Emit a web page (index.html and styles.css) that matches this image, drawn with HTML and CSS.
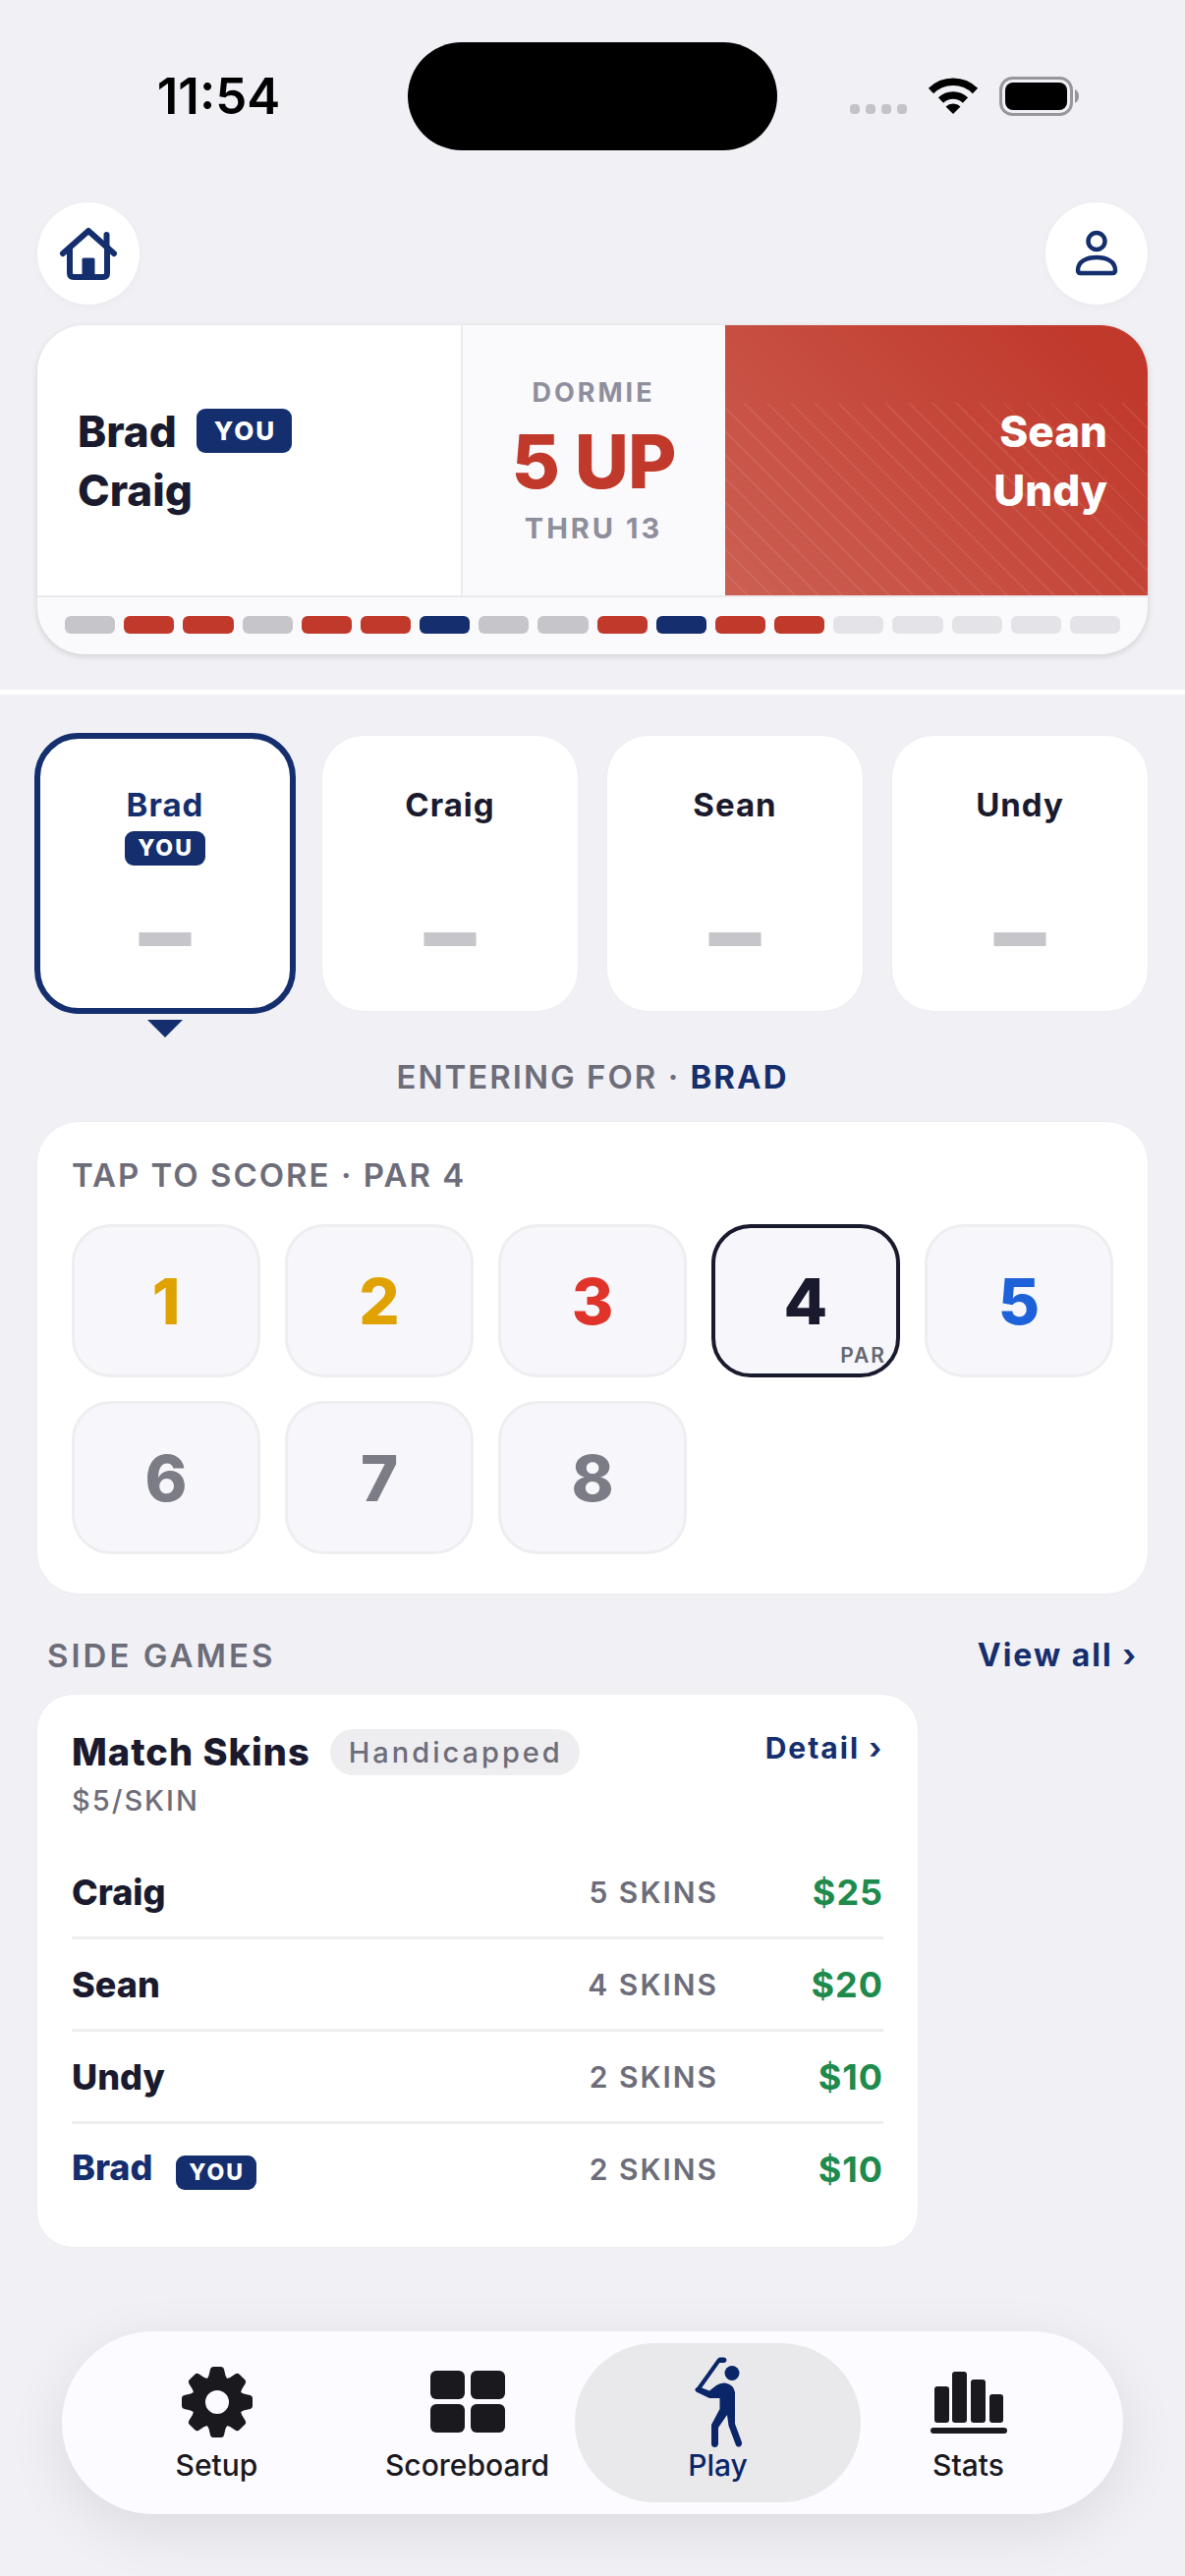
FILE: index.html
```html
<!DOCTYPE html>
<html lang="en">
<head>
    <meta charset="UTF-8">
    <meta name="viewport" content="width=device-width, initial-scale=1.0">
    <title>Match Play</title>
    <link rel="stylesheet" href="styles.css">
</head>
<body>
    <div class="status-bar">
        <div class="status-time">11:54</div>
        <div class="island"></div>
        <div class="status-icons">
            <svg class="dots" width="58" height="38" viewBox="0 0 58 38">
                <rect x="0" y="27" width="10" height="10" rx="4"/>
                <rect x="16" y="27" width="10" height="10" rx="4"/>
                <rect x="32" y="27" width="10" height="10" rx="4"/>
                <rect x="48" y="27" width="10" height="10" rx="4"/>
            </svg>
            <svg width="52" height="38" viewBox="0 0 52 38">
                <path d="M26 37 L18.500 29.500 A11 11 0 0 1 33.500 29.500 Z"/>
                <path d="M13.500 23 A18 18 0 0 1 38.500 23" fill="none" stroke="#000" stroke-width="7.500"/>
                <path d="M3.500 13.500 A32 32 0 0 1 48.500 13.500" fill="none" stroke="#000" stroke-width="7.500"/>
            </svg>
            <svg width="82" height="40" viewBox="0 0 82 40">
                <rect x="1.500" y="1.500" width="72" height="37" rx="12" fill="none" stroke="#97979b" stroke-width="3"/>
                <rect x="6" y="6" width="63" height="28" rx="8"/>
                <path d="M77 13 Q81 15 81 20 Q81 25 77 27 Z" fill="#97979b"/>
            </svg>
        </div>
    </div>

    <header class="top-nav">
        <button class="round-btn" aria-label="Home">
            <svg width="60" height="54" viewBox="0 0 60 54" fill="none" stroke="#142e6e" stroke-width="6" stroke-linecap="round" stroke-linejoin="round">
                <path d="M4 27 L30 4 L56 27"/>
                <path d="M11 23 V47 Q11 51 15 51 H45 Q49 51 49 47 V23"/>
                <path d="M48.500 8 V19"/>
                <path d="M25 33 H35 V51 H25 Z" fill="#142e6e" stroke-width="3"/>
            </svg>
        </button>
        <button class="round-btn" aria-label="Profile">
            <svg width="44" height="48" viewBox="0 0 44 48" fill="none" stroke="#142e6e" stroke-width="4.500">
                <circle cx="22" cy="11.500" r="8.500"/>
                <path d="M3 41 C3 32 12 28 22 28 C32 28 41 32 41 41 Q41 44 38 44 H6 Q3 44 3 41 Z" stroke-linejoin="round"/>
            </svg>
        </button>
    </header>

    <section class="match">
        <div class="match-top">
            <div class="team">
                <div class="team-name">Brad <span class="you you-large">YOU</span></div>
                <div class="team-name">Craig</div>
            </div>
            <div class="match-status">
                <div class="dormie">DORMIE</div>
                <div class="status-big">5 UP</div>
                <div class="thru">THRU 13</div>
            </div>
            <div class="team team-red">
                <div class="team-name">Sean</div>
                <div class="team-name">Undy</div>
            </div>
        </div>
        <div class="holes">
            <span class="hole halved"></span>
            <span class="hole red"></span>
            <span class="hole red"></span>
            <span class="hole halved"></span>
            <span class="hole red"></span>
            <span class="hole red"></span>
            <span class="hole blue"></span>
            <span class="hole halved"></span>
            <span class="hole halved"></span>
            <span class="hole red"></span>
            <span class="hole blue"></span>
            <span class="hole red"></span>
            <span class="hole red"></span>
            <span class="hole"></span>
            <span class="hole"></span>
            <span class="hole"></span>
            <span class="hole"></span>
            <span class="hole"></span>
        </div>
    </section>

    <main>
        <div class="players">
            <button class="player selected">
                <span class="player-name">Brad</span>
                <span class="you">YOU</span>
                <span class="player-score">–</span>
            </button>
            <button class="player">
                <span class="player-name">Craig</span>
                <span class="player-score">–</span>
            </button>
            <button class="player">
                <span class="player-name">Sean</span>
                <span class="player-score">–</span>
            </button>
            <button class="player">
                <span class="player-name">Undy</span>
                <span class="player-score">–</span>
            </button>
        </div>

        <p class="entering">ENTERING FOR · <strong>BRAD</strong></p>

        <section class="keypad">
            <h2 class="label">TAP TO SCORE · PAR 4</h2>
            <div class="keys">
                <button class="key eagle">1</button>
                <button class="key eagle">2</button>
                <button class="key birdie">3</button>
                <button class="key par">4<span class="par-tag">PAR</span></button>
                <button class="key bogey">5</button>
                <button class="key">6</button>
                <button class="key">7</button>
                <button class="key">8</button>
            </div>
        </section>

        <div class="section-head">
            <h2 class="label">SIDE GAMES</h2>
            <a class="view-all" href="#">View all ›</a>
        </div>

        <section class="game">
            <div class="game-head">
                <h3>Match Skins</h3>
                <span class="pill">Handicapped</span>
                <a class="detail" href="#">Detail ›</a>
            </div>
            <p class="stake">$5/SKIN</p>
            <table class="skins">
                <tr>
                    <th scope="row">Craig</th>
                    <td class="count">5 SKINS</td>
                    <td class="money">$25</td>
                </tr>
                <tr>
                    <th scope="row">Sean</th>
                    <td class="count">4 SKINS</td>
                    <td class="money">$20</td>
                </tr>
                <tr>
                    <th scope="row">Undy</th>
                    <td class="count">2 SKINS</td>
                    <td class="money">$10</td>
                </tr>
                <tr class="me">
                    <th scope="row">Brad <span class="you">YOU</span></th>
                    <td class="count">2 SKINS</td>
                    <td class="money">$10</td>
                </tr>
            </table>
        </section>
    </main>

    <nav class="tabs">
        <a class="tab" href="#">
            <svg width="72" height="72" viewBox="-36 -36 72 72">
                <defs>
                    <path id="tooth" d="M-12 -22 Q-9.500 -24 -8.500 -27 L-7 -33.500 Q-6.500 -36 -4 -36 H4 Q6.500 -36 7 -33.500 L8.500 -27 Q9.500 -24 12 -22 Z"/>
                </defs>
                <circle r="18.500" fill="none" stroke="#1a191e" stroke-width="13"/>
                <use href="#tooth"/>
                <use href="#tooth" transform="rotate(45)"/>
                <use href="#tooth" transform="rotate(90)"/>
                <use href="#tooth" transform="rotate(135)"/>
                <use href="#tooth" transform="rotate(180)"/>
                <use href="#tooth" transform="rotate(225)"/>
                <use href="#tooth" transform="rotate(270)"/>
                <use href="#tooth" transform="rotate(315)"/>
            </svg>
            <span>Setup</span>
        </a>
        <a class="tab" href="#">
            <svg width="76" height="72" viewBox="0 0 76 72">
                <rect x="0" y="4" width="35" height="29" rx="6"/>
                <rect x="41" y="4" width="35" height="29" rx="6"/>
                <rect x="0" y="38" width="35" height="29" rx="6"/>
                <rect x="41" y="38" width="35" height="29" rx="6"/>
            </svg>
            <span>Scoreboard</span>
        </a>
        <a class="tab active" href="#">
            <svg width="48" height="92" viewBox="0 0 48 92">
                <circle cx="38" cy="16.500" r="7.500"/>
                <path d="M3.500 33 L25 3 H30" fill="none" stroke="#0a2568" stroke-width="4" stroke-linecap="round" stroke-linejoin="round"/>
                <path d="M25 0.500 H30 Q32.500 1 32.500 3 Q32 6 29.500 6 H24 Z"/>
                <path d="M6 31 L15 34.500 L22 29 Q26 26 31 26.500 Q40 28 41 36 V68 L48 87 Q48.500 90 46 91.500 Q43 92 42 90 L34.500 70 L33 59 L24 72 V89 Q23 92 20.500 92 Q17.500 92 17 89 V69 L25.500 53 V42 H15 L1.500 35.500 Q-1 33 2 31 Z"/>
            </svg>
            <span>Play</span>
        </a>
        <a class="tab" href="#">
            <svg width="78" height="72" viewBox="0 0 78 72">
                <rect x="4" y="20" width="15" height="37" rx="3"/>
                <rect x="22" y="5" width="15" height="52" rx="3"/>
                <rect x="41" y="13" width="15" height="44" rx="3"/>
                <rect x="60" y="28" width="14" height="29" rx="3"/>
                <rect x="0" y="62" width="78" height="6" rx="3"/>
            </svg>
            <span>Stats</span>
        </a>
    </nav>
</body>
</html>
```
FILE: styles.css
```css
* {
    box-sizing: border-box;
}

body {
    margin: 0;
    min-height: 100vh;
    display: flex;
    flex-direction: column;
    background-color: #f1f0f5;
    color: #1a1a2e;
    font-family: Inter, "Liberation Sans", sans-serif;
}

button {
    font-family: inherit;
    border: none;
    padding: 0;
    color: inherit;
    cursor: pointer;
}

a {
    color: #142e6e;
    text-decoration: none;
}

h2, h3, p {
    margin: 0;
}

/* status bar */
.status-bar {
    display: grid;
    grid-template-columns: 1fr 376px 1fr;
    align-items: center;
    height: 195px;
    color: #000;
}

.status-time {
    padding-left: 30px;
    text-align: center;
    font-size: 51px;
    font-weight: 600;
}

.island {
    height: 110px;
    border-radius: 55px;
    background-color: #000;
}

.status-icons {
    display: flex;
    justify-content: flex-end;
    align-items: center;
    gap: 21px;
    padding-right: 107px;
}

.dots {
    fill: #c4c3c8;
}

/* header */
.top-nav {
    display: flex;
    justify-content: space-between;
    padding: 11px 38px 21px;
}

.round-btn {
    display: flex;
    align-items: center;
    justify-content: center;
    width: 104px;
    height: 104px;
    border-radius: 50%;
    background-color: #fff;
    box-shadow: 0 2px 8px rgba(0, 0, 0, 0.03);
}

/* match card */
.match {
    margin: 0 38px 36px;
    border-radius: 48px;
    overflow: hidden;
    background-color: #fafafc;
    box-shadow: 0 2px 6px rgba(0, 0, 0, 0.14);
}

.match-top {
    display: grid;
    grid-template-columns: 1fr 269px 1fr;
    height: 275px;
}

.team {
    display: flex;
    flex-direction: column;
    justify-content: center;
    padding: 0 41px;
    background-color: #fff;
}

.team-name {
    display: flex;
    align-items: center;
    gap: 20px;
    font-size: 44px;
    font-weight: 800;
    line-height: 60px;
}

.team-red {
    align-items: flex-end;
    color: #fff;
    background:
        repeating-linear-gradient(45deg, transparent 0 15px, rgba(255, 255, 255, 0.07) 15px 17px) bottom / 100% 196px no-repeat,
        linear-gradient(45deg, #cc5f53, #c0392b 90%);
}

.match-status {
    display: flex;
    flex-direction: column;
    align-items: center;
    justify-content: center;
    border-left: 2px solid #ebebee;
}

.dormie,
.thru {
    color: #8e8e9c;
    font-size: 27px;
    font-weight: 700;
    letter-spacing: 3px;
    line-height: 42px;
}

.thru {
    font-size: 29px;
}

.status-big {
    color: #c0392b;
    font-size: 76px;
    font-weight: 800;
    letter-spacing: -1px;
    line-height: 96px;
}

.holes {
    display: flex;
    gap: 9px;
    padding: 19px 28px 21px;
    border-top: 2px solid #ebebee;
}

.hole {
    flex: 1;
    height: 18px;
    border-radius: 6px;
    background-color: #e4e4e8;
}

.hole.halved {
    background-color: #c6c6ca;
}

.hole.red {
    background-color: #c0392b;
}

.hole.blue {
    background-color: #142e6e;
}

.you {
    padding: 0 12px 0 13px;
    border-radius: 9px;
    background-color: #142e6e;
    color: #fff;
    font-size: 23px;
    font-weight: 800;
    letter-spacing: 2px;
    line-height: 35px;
}

.you-large {
    padding: 0 16px 0 18px;
    font-size: 26px;
    line-height: 45px;
}

/* score entry */
main {
    padding: 42px 38px;
    border-top: 5px solid #fff;
}

.players {
    display: grid;
    grid-template-columns: repeat(4, 1fr);
    gap: 30px;
}

.player {
    position: relative;
    display: flex;
    flex-direction: column;
    align-items: center;
    gap: 7px;
    height: 280px;
    padding-top: 50px;
    border-radius: 42px;
    background-color: #fff;
    box-shadow: 0 0 3px rgba(0, 0, 0, 0.04);
}

.player.selected {
    outline: 6px solid #142e6e;
    outline-offset: -3px;
}

/* arrow under the selected player */
.player.selected::after {
    content: "";
    position: absolute;
    top: 289px;
    border: 18px solid transparent;
    border-top-color: #142e6e;
    border-bottom: none;
}

.player-name {
    font-size: 33px;
    font-weight: 700;
    letter-spacing: 1px;
    line-height: 40px;
}

.selected .player-name {
    color: #142e6e;
}

.player-score {
    margin-top: auto;
    padding-bottom: 30px;
    color: #c6c6ca;
    font-size: 106px;
    font-weight: 800;
    line-height: 100px;
}

.label,
.entering {
    color: #6d6d7a;
    font-size: 33px;
    font-weight: 600;
    letter-spacing: 2px;
    line-height: 40px;
}

.entering {
    margin: 47px 0 26px;
    text-align: center;
}

.entering strong {
    color: #142e6e;
    font-weight: 700;
}

.keypad {
    padding: 34px 35px 40px;
    border-radius: 42px;
    background-color: #fff;
    box-shadow: 0 0 3px rgba(0, 0, 0, 0.04);
}

.keys {
    display: grid;
    grid-template-columns: repeat(5, 1fr);
    gap: 24px 25px;
    margin-top: 30px;
}

.key {
    position: relative;
    height: 156px;
    border: 3px solid #eeeef1;
    border-radius: 40px;
    background-color: #f7f7fb;
    color: #7c7c86;
    font-size: 65px;
    font-weight: 800;
}

.key.eagle {
    color: #e0a200;
}

.key.birdie {
    color: #e0332a;
}

.key.par {
    border: 4px solid #1a1a2e;
    color: #1a1a2e;
}

.key.bogey {
    color: #1d62d8;
}

.par-tag {
    position: absolute;
    right: 10px;
    bottom: 5px;
    color: #66666f;
    font-size: 21px;
    font-weight: 600;
    letter-spacing: 2px;
    line-height: 26px;
}

/* side games */
.section-head {
    display: flex;
    justify-content: space-between;
    margin: 43px 10px 20px;
}

.section-head .label {
    letter-spacing: 3px;
}

.view-all,
.detail {
    font-weight: 700;
    letter-spacing: 2px;
    line-height: 40px;
}

.view-all {
    font-size: 32px;
}

.detail {
    align-self: flex-start;
    margin-left: auto;
    font-size: 30px;
    line-height: 38px;
}

.game {
    width: 79.3%;
    padding: 35px 35px 34px;
    border-radius: 36px;
    background-color: #fff;
    box-shadow: 0 0 3px rgba(0, 0, 0, 0.04);
}

.game-head {
    display: flex;
    align-items: center;
}

.game h3 {
    margin-right: 20px;
    font-size: 38px;
    font-weight: 800;
    letter-spacing: 1px;
    line-height: 47px;
}

.pill {
    padding: 0 17px 0 19px;
    border-radius: 24px;
    background-color: #eeeef0;
    color: #6d6d7a;
    font-size: 29px;
    font-weight: 500;
    letter-spacing: 3px;
    line-height: 47px;
}

.stake {
    margin: 8px 0 29px;
    color: #6d6d7a;
    font-size: 29px;
    font-weight: 500;
    letter-spacing: 2px;
    line-height: 36px;
}

.skins {
    width: 100%;
    border-spacing: 0;
    line-height: 40px;
}

.skins th,
.skins td {
    height: 94px;
    padding: 0;
    border-bottom: 3px solid #eeeef0;
    font-size: 36px;
    font-weight: 800;
    text-align: right;
}

.skins th {
    text-align: left;
}

.skins .me th,
.skins .me td {
    height: 91px;
    border-bottom: none;
}

.skins .me th {
    color: #142e6e;
}

.skins .you {
    display: inline-block;
    margin-left: 16px;
}

.skins .count {
    color: #6d6d7a;
    font-size: 30px;
    font-weight: 600;
    letter-spacing: 2px;
}

.skins .money {
    width: 168px;
    color: #1e8a4c;
    font-weight: 700;
    letter-spacing: 1px;
}

/* bottom tabs */
.tabs {
    display: grid;
    grid-template-columns: repeat(4, 1fr);
    margin: auto 63px 63px;
    padding: 12px 30px;
    border-radius: 93px;
    background-color: #fcfbff;
    box-shadow: 0 16px 60px rgba(0, 0, 0, 0.09);
}

.tab {
    display: flex;
    flex-direction: column;
    align-items: center;
    justify-content: flex-end;
    height: 162px;
    margin: 0 -18px;
    padding-bottom: 20px;
    border-radius: 81px;
    color: #1a191e;
    fill: #1a191e;
    font-size: 30px;
    font-weight: 500;
    line-height: 36px;
}

.tab svg {
    margin-bottom: 10px;
}

.tab.active {
    background-color: #e9e9ec;
    color: #0a2568;
    fill: #0a2568;
}

.tab.active svg {
    margin-bottom: 0;
}
```
